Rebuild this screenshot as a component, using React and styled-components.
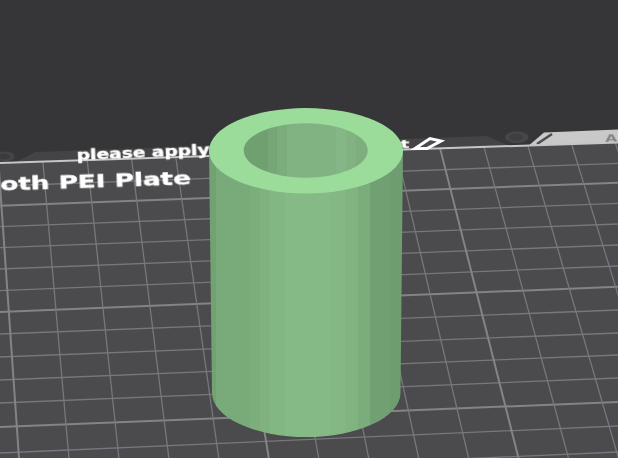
import React from "react";
import styled, { createGlobalStyle } from "styled-components";

const Global = createGlobalStyle`
  html, body { margin: 0; padding: 0; background: #363537; }
  #root { width: 618px; height: 458px; overflow: hidden; }
`;

const Viewport = styled.main`
  width: 618px;
  height: 458px;
  overflow: hidden;
  background: #363537;
`;

const Scene = styled.svg`
  display: block;
  width: 618px;
  height: 458px;
`;

const GridLine = styled.line`
  stroke: ${(p) => (p.$major ? "#848387" : "#78777d")};
  stroke-width: ${(p) => (p.$major ? 2 : 1.3)};
`;

const PlateEdge = styled.line`
  stroke: #c6c6c6;
  stroke-width: 2;
`;

const PlateLabel = styled.text`
  font-family: "DejaVu Sans", sans-serif;
  font-weight: 700;
  fill: #ffffff;
  stroke: #ffffff;
  stroke-width: 0.4px;
  filter: blur(0.35px);
`;

const TabLabel = styled.text`
  font-family: "DejaVu Sans", sans-serif;
  font-weight: 700;
  font-size: 13px;
  fill: #858587;
  filter: blur(0.35px);
`;

const hLines = [
  [186, 163.3], [205.7, 182.7, 1], [226.7, 203.3], [247.7, 224], [269, 245],
  [290.7, 266], [312, 286.7, 1], [334, 310], [357, 333], [380, 355],
  [403, 378], [427, 402, 1], [453, 426], [479, 452],
];

const uLines = Array.from({ length: 15 }, (_, u) => u);
const gridX = (u, y) => 8 + 47.05 * u + ((y - 300) * (11 + 2.9 * u)) / 158;
const edgeY = (x) => 163 - 0.0332 * x;

const bodyBands = [
  [209, "#72a172"], [216, "#79aa79"], [250, "#7cae7c"], [260, "#7fb27f"], [270, "#82b682"],
  [285, "#85b985"], [330, "#83b783"], [345, "#80b380"], [358, "#7aad7b"], [370, "#71a173"],
  [390, "#6e9d71"],
];
const holeBands = [
  [243, "#709f70"], [268, "#76a676"], [277, "#7bac7b"], [287, "#81b281"], [336, "#85b685"],
  [346, "#81b281"], [356, "#7eae7e"],
];

const Bands = ({ bands, end, top, height }) =>
  bands.map(([x, color], i) => {
    const next = i + 1 < bands.length ? bands[i + 1][0] : end;
    return <rect key={x} x={x} y={top} width={next - x} height={height} fill={color} />;
  });

export default function App() {
  return (
    <Viewport>
      <Global />
      <Scene viewBox="0 0 618 458" xmlns="http://www.w3.org/2000/svg">
        <defs>
          <clipPath id="body">
            <path d="M209 151 L212 393 A94.25 44 0 0 0 400.5 393 L403 151 Z" />
          </clipPath>
          <clipPath id="hole">
            <ellipse cx="305.7" cy="150.5" rx="62" ry="27.2" />
          </clipPath>
        </defs>

        {/* back rails behind the build plate */}
        <path d="M14 163 L35 152 L487 136 L507 145 L507 148 Z" fill="#444345" />
        <ellipse cx="5" cy="156.5" rx="10" ry="5" fill="#454446" />
        <ellipse cx="4" cy="156.5" rx="6" ry="2.8" fill="#3b3a3c" />
        <ellipse cx="516.7" cy="137.3" rx="11.7" ry="6" fill="#464547" />
        <ellipse cx="516" cy="137.3" rx="7" ry="3.2" fill="#3e3d3f" />

        {/* light tab top right */}
        <path d="M527 147 L544 132.5 L618 129.5 L618 144 Z" fill="#c9c9c9" />
        <line x1="537" y1="144" x2="552" y2="134" stroke="#4c4b4d" strokeWidth="2.4" />
        <TabLabel transform="translate(605 142.5) rotate(-2) scale(1.25 0.85)">A</TabLabel>

        {/* plate */}
        <path d={`M0 ${edgeY(0)} L618 ${edgeY(618)} L618 458 L0 458 Z`} fill="#4b4a4c" />
        {hLines.map(([a, b, major]) => (
          <GridLine key={a} x1="0" y1={a} x2="618" y2={b} $major={!!major} />
        ))}
        {uLines.map((u) => {
          const top = edgeY(gridX(u, 150));
          return (
            <GridLine
              key={u}
              x1={gridX(u, top)}
              y1={top}
              x2={gridX(u, 458)}
              y2="458"
              $major={u % 5 === 0}
            />
          );
        })}
        <PlateEdge x1="0" y1={edgeY(0)} x2="618" y2={edgeY(618)} />

        {/* labels printed on the plate */}
        <PlateLabel
          fontSize="14"
          transform="translate(77 160) rotate(-2.4) scale(1.33 1)"
        >
          please apply
        </PlateLabel>
        <PlateLabel
          fontSize="14"
          transform="translate(401 148) rotate(-2) scale(1.25 0.8)"
        >
          t
        </PlateLabel>
        <path d="M415 148.5 L430 138.5 L441 141 L427 148.5 Z" fill="#4b4a4c" stroke="#ffffff" strokeWidth="3" />
        <PlateLabel
          fontSize="17.5"
          transform="translate(0.5 190.5) rotate(-1.9) scale(1.5 1)"
        >
          oth PEI Plate
        </PlateLabel>

        {/* cylinder */}
        <g clipPath="url(#body)">
          <Bands bands={bodyBands} end={404} top={140} height={310} />
        </g>
        <ellipse cx="306" cy="150.8" rx="97" ry="42.7" fill="#9bdc9b" />
        <g clipPath="url(#hole)">
          <Bands bands={holeBands} end={369} top={120} height={60} />
        </g>
      </Scene>
    </Viewport>
  );
}
